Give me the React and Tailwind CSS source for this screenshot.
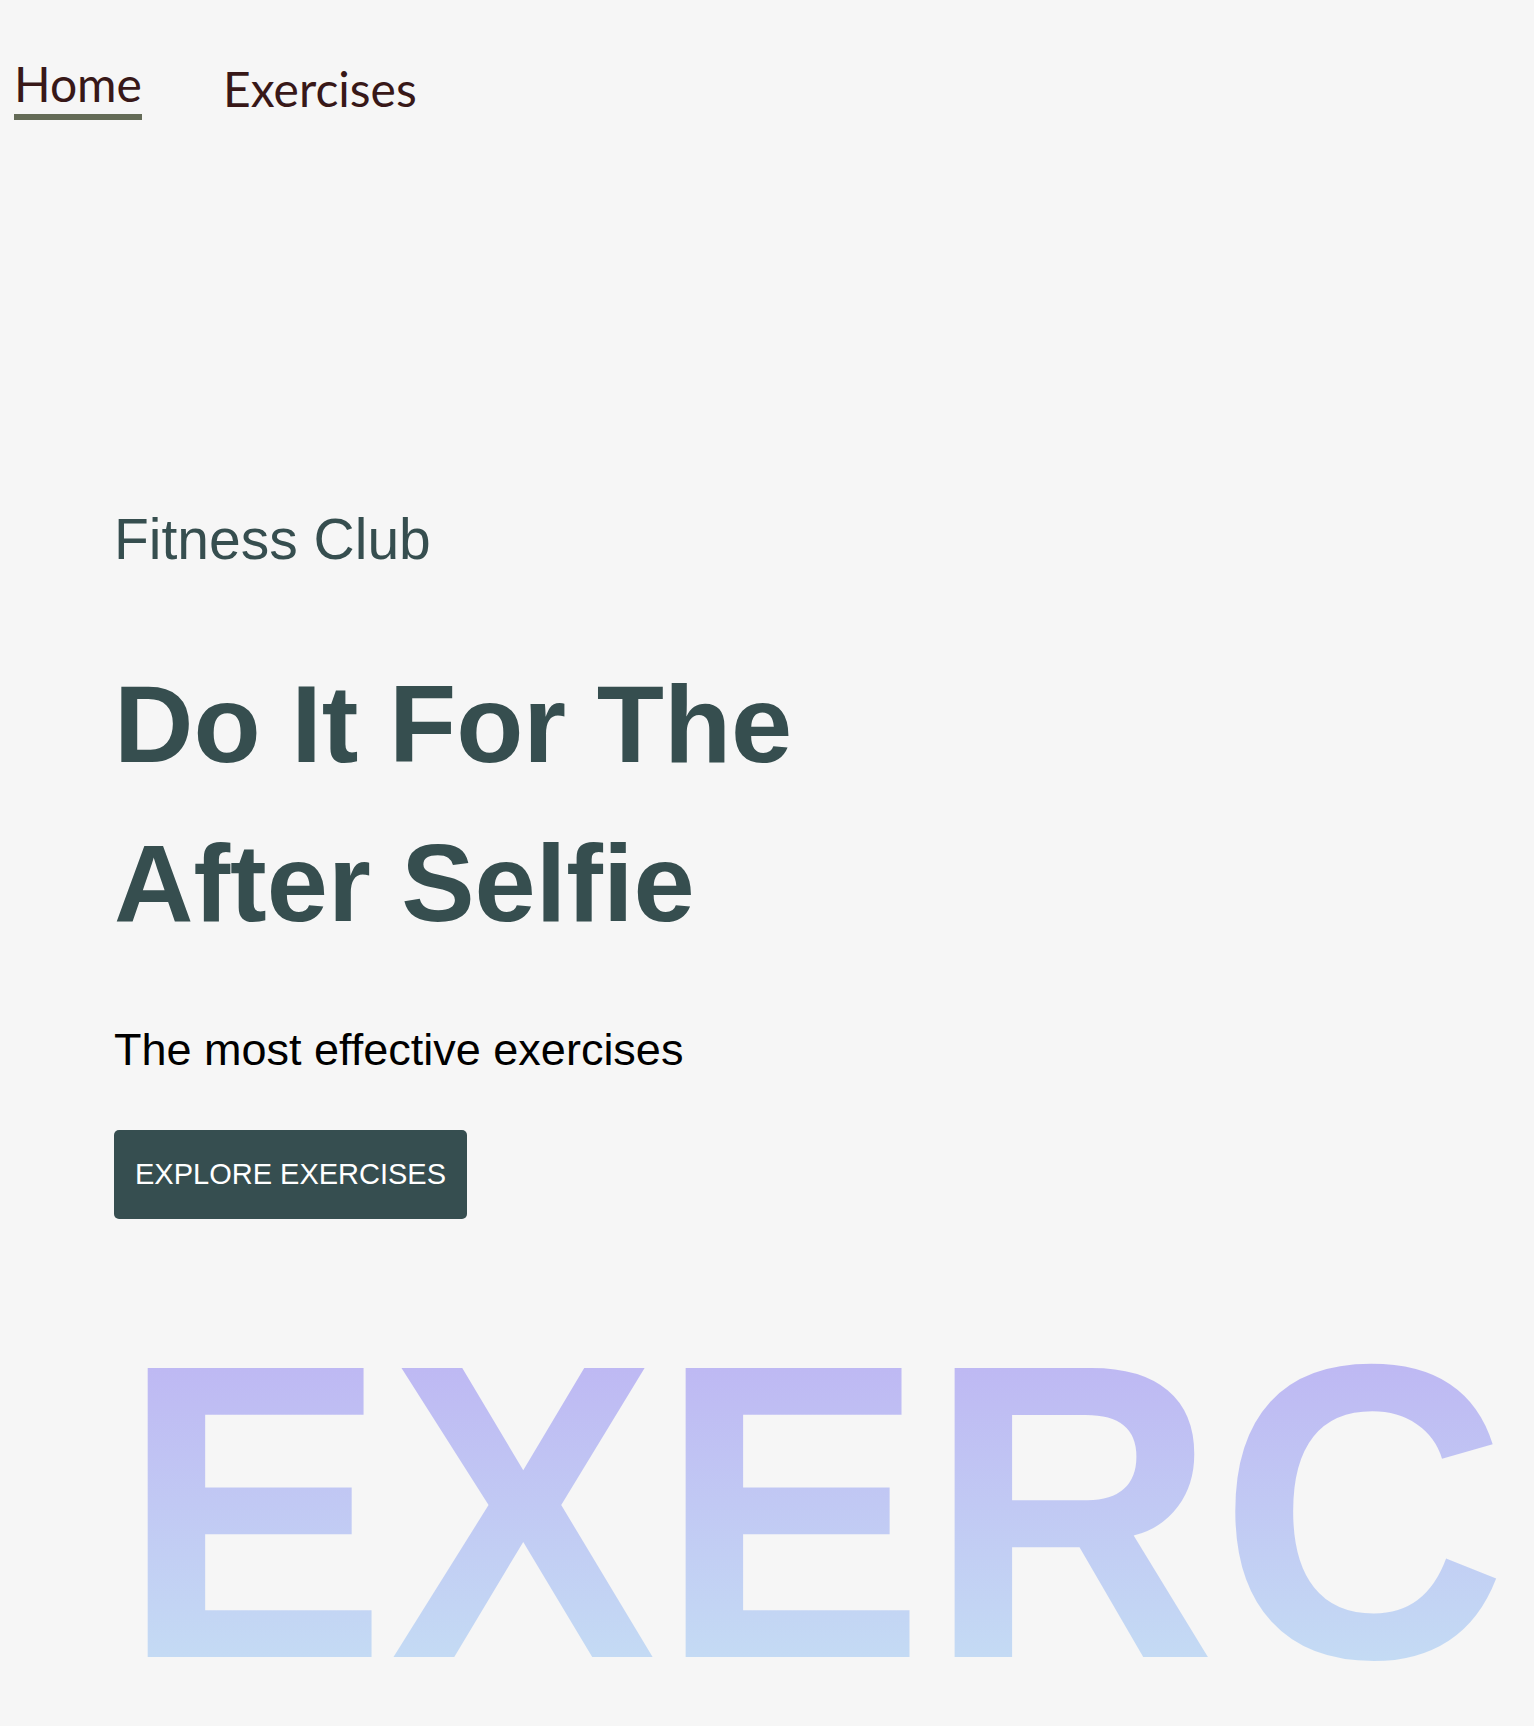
import React from 'react';

const NavLink = ({ label, active }) => (
  <a
    href="#"
    className={
      active
        ? 'flex flex-col w-[128px] text-[#381818] text-[48px] leading-none'
        : 'flex flex-col mt-[5px] text-[#381818] text-[48px] leading-none'
    }
    style={{ fontFamily: 'Lato, "Open Sans", sans-serif' }}
  >
    <span>{label}</span>
    {active && <span className="mt-[6px] h-[6px] w-full bg-[#646b57]"></span>}
  </a>
);

const App = () => {
  return (
    <div
      className="min-h-screen bg-[#f6f6f6]"
      style={{ fontFamily: '"Liberation Sans", Arial, sans-serif' }}
    >
      {/* Top nav */}
      <nav className="flex items-start gap-[81px] pl-[14px] pt-[60px]">
        <NavLink label="Home" active />
        <NavLink label="Exercises" />
      </nav>

      {/* Hero */}
      <section className="pl-[114px] pt-[391px]">
        <p className="text-[57px] leading-none text-[#364e4f]">Fitness Club</p>
        <h1 className="mt-[76px] text-[110px] leading-[159px] font-bold text-[#364e4f]">
          Do It For The
          <br />
          After Selfie
        </h1>
        <p className="mt-[65px] text-[45px] leading-none text-black">
          The most effective exercises
        </p>
        <button className="mt-[58px] h-[89px] rounded-[5px] bg-[#364e50] px-[21px] text-[29px] leading-none text-white">
          EXPLORE EXERCISES
        </button>
      </section>

      {/* Big gradient word, cut at the right */}
      <div className="mt-[143px] ml-[121px] flex w-[1379px] overflow-hidden">
        <div className="shrink-0 origin-left scale-x-[0.95] whitespace-nowrap text-[420px] leading-[300px] tracking-[3px] font-bold text-transparent bg-clip-text bg-gradient-to-b from-[#beb8f3] to-[#c4dbf4]">
          EXERCISES
        </div>
      </div>
      <div className="h-[59px]"></div>
    </div>
  );
};

export default App;
